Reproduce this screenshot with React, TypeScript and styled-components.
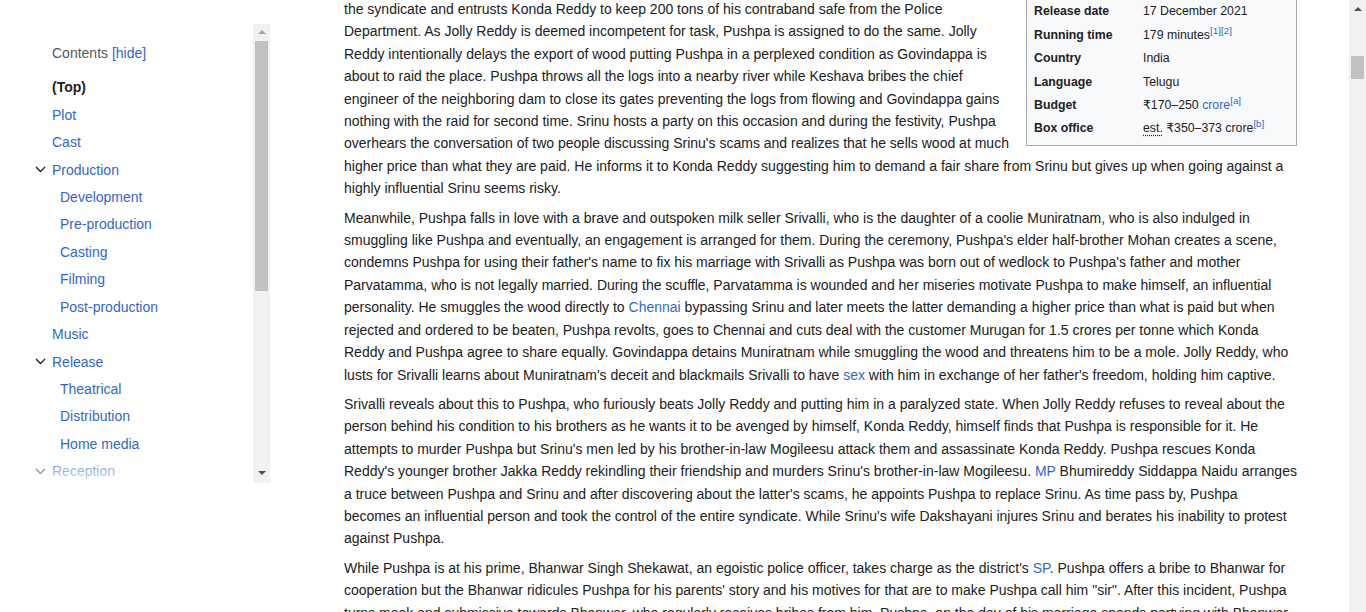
import React from "react";
import styled, { createGlobalStyle } from "styled-components";

const Global = createGlobalStyle`
  html, body { margin: 0; padding: 0; background: #fff; overflow: hidden; }
  body { font-family: "Liberation Sans", Arial, "DejaVu Sans", sans-serif; color: #202122; }
  * { box-sizing: border-box; }
`;

const Page = styled.div`
  display: flex;
  width: 1366px;
  height: 612px;
  overflow: hidden;
`;

/* ---------- Sidebar / TOC ---------- */
const Sidebar = styled.aside`
  flex: none;
  width: 270px;
  padding-top: 24px;
`;

const TocPanel = styled.nav`
  display: flex;
  height: 459px;
  padding-left: 30px;
`;

const TocScroll = styled.div`
  flex: 1;
  position: relative;
  overflow: hidden;
  padding-top: 19px;
`;

const TocHeader = styled.div`
  font-size: 14px;
  line-height: 20px;
  padding-left: 22px;
  margin-bottom: 10.5px;
  color: #54595d;
`;

const HideLink = styled.a`
  color: #3366cc;
  text-decoration: none;
  cursor: pointer;
`;

const TocList = styled.ul`
  list-style: none;
  margin: 0;
  padding: 0;
`;

const TocRow = styled.li<{ $sub?: boolean }>`
  display: grid;
  grid-template-columns: 22px 1fr;
  align-items: center;
  height: 27.45px;
  font-size: 14px;
  line-height: 20px;
  padding-left: ${(p) => (p.$sub ? "8px" : "0")};
`;

const Toggle = styled.span`
  display: flex;
  align-items: center;
  padding-left: 5px;
  color: #202122;
`;

const TocLink = styled.a<{ $current?: boolean }>`
  color: ${(p) => (p.$current ? "#202122" : "#3366cc")};
  font-weight: ${(p) => (p.$current ? "bold" : "normal")};
  text-decoration: none;
  white-space: nowrap;
`;

const Fade = styled.div`
  position: absolute;
  left: 0;
  right: 0;
  bottom: 0;
  height: 34px;
  background: linear-gradient(to bottom, rgba(255, 255, 255, 0), rgba(255, 255, 255, 0.8));
  pointer-events: none;
`;

/* ---------- Scrollbars ---------- */
const Track = styled.div<{ $top: number }>`
  flex: none;
  width: 17px;
  background: #f1f1f1;
  display: flex;
  flex-direction: column;
  align-items: center;
  padding-top: ${(p) => p.$top}px;
`;

const ArrowUp = styled.div<{ $color: string }>`
  width: 0;
  height: 0;
  border-left: 4px solid transparent;
  border-right: 4px solid transparent;
  border-bottom: 4px solid ${(p) => p.$color};
`;

const ArrowDown = styled.div<{ $color: string }>`
  width: 0;
  height: 0;
  margin-top: auto;
  margin-bottom: 8px;
  border-left: 4px solid transparent;
  border-right: 4px solid transparent;
  border-top: 4px solid ${(p) => p.$color};
`;

const Thumb = styled.div<{ $offset: number; $size: number }>`
  width: 13px;
  margin-top: ${(p) => p.$offset}px;
  height: ${(p) => p.$size}px;
  background: #c1c1c1;
`;

/* ---------- Main article ---------- */
const Main = styled.main`
  flex: 1;
  min-width: 0;
  padding: 0 52px 0 74px;
`;

const Article = styled.div`
  margin-top: -2px;
`;

const Para = styled.p`
  margin: 7px 0;
  font-size: 14px;
  line-height: 22.4px;
  color: #202122;
  &:first-of-type { margin-top: 0; }
`;

const A = styled.a`
  color: #3366cc;
  text-decoration: none;
`;

const Infobox = styled.table`
  float: right;
  clear: right;
  width: 271px;
  margin: -3px 0 7px 14px;
  padding: 4px 0 5px 0;
  border: 1px solid #a2a9b1;
  border-spacing: 0;
  background: #f8f9fa;
  font-size: 12.3px;
  line-height: 1.5;
  color: #202122;
`;

const Label = styled.th`
  width: 116px;
  height: 23.4px;
  padding: 0 0 0 7px;
  text-align: left;
  vertical-align: middle;
  font-weight: bold;
`;

const Value = styled.td`
  height: 23.4px;
  padding: 0 4px 0 0;
  vertical-align: middle;
`;

const Ref = styled.sup`
  font-size: 0.8em;
  line-height: 1;
  vertical-align: super;
  color: #3366cc;
  font-weight: normal;
`;

const Abbr = styled.abbr`
  text-decoration: underline dotted;
  text-underline-offset: 2px;
`;

const Chevron = () => (
  <svg width="11" height="7" viewBox="0 0 11 7" fill="none">
    <path d="M1 1l4.5 4.5L10 1" stroke="currentColor" strokeWidth="1.4" />
  </svg>
);

type Item = { label: string; sub?: boolean; toggle?: boolean; current?: boolean };

const tocItems: Item[] = [
  { label: "(Top)", current: true },
  { label: "Plot" },
  { label: "Cast" },
  { label: "Production", toggle: true },
  { label: "Development", sub: true },
  { label: "Pre-production", sub: true },
  { label: "Casting", sub: true },
  { label: "Filming", sub: true },
  { label: "Post-production", sub: true },
  { label: "Music" },
  { label: "Release", toggle: true },
  { label: "Theatrical", sub: true },
  { label: "Distribution", sub: true },
  { label: "Home media", sub: true },
  { label: "Reception", toggle: true },
  { label: "Box office", sub: true },
  { label: "Critical response", sub: true },
];

export default function App() {
  return (
    <>
      <Global />
      <Page>
        <Sidebar>
          <TocPanel>
            <TocScroll>
              <TocHeader>
                Contents <HideLink>[hide]</HideLink>
              </TocHeader>
              <TocList>
                {tocItems.map((it) => (
                  <TocRow key={it.label} $sub={it.sub}>
                    <Toggle>{it.toggle ? <Chevron /> : null}</Toggle>
                    <TocLink $current={it.current}>{it.label}</TocLink>
                  </TocRow>
                ))}
              </TocList>
              <Fade />
            </TocScroll>
            <Track $top={6}>
              <ArrowUp $color="#a3a3a3" />
              <Thumb $offset={7} $size={250} />
              <ArrowDown $color="#505050" />
            </Track>
          </TocPanel>
        </Sidebar>

        <Main>
          <Article>
            <Para>
              <Infobox>
                <tbody>
                  <tr>
                    <Label>Release date</Label>
                    <Value>17 December 2021</Value>
                  </tr>
                  <tr>
                    <Label>Running time</Label>
                    <Value>
                      179 minutes<Ref>[1]</Ref>
                      <Ref>[2]</Ref>
                    </Value>
                  </tr>
                  <tr>
                    <Label>Country</Label>
                    <Value>India</Value>
                  </tr>
                  <tr>
                    <Label>Language</Label>
                    <Value>Telugu</Value>
                  </tr>
                  <tr>
                    <Label>Budget</Label>
                    <Value>
                      ₹170–250 <A>crore</A>
                      <Ref>[a]</Ref>
                    </Value>
                  </tr>
                  <tr>
                    <Label>Box office</Label>
                    <Value>
                      <Abbr>est.</Abbr> ₹350–373 crore<Ref>[b]</Ref>
                    </Value>
                  </tr>
                </tbody>
              </Infobox>
              the syndicate and entrusts Konda Reddy to keep 200 tons of his contraband safe from the Police
              Department. As Jolly Reddy is deemed incompetent for task, Pushpa is assigned to do the same. Jolly
              Reddy intentionally delays the export of wood putting Pushpa in a perplexed condition as Govindappa is
              about to raid the place. Pushpa throws all the logs into a nearby river while Keshava bribes the chief
              engineer of the neighboring dam to close its gates preventing the logs from flowing and Govindappa gains
              nothing with the raid for second time. Srinu hosts a party on this occasion and during the festivity,
              Pushpa overhears the conversation of two people discussing Srinu's scams and realizes that he sells wood
              at much higher price than what they are paid. He informs it to Konda Reddy suggesting him to demand a
              fair share from Srinu but gives up when going against a highly influential Srinu seems risky.
            </Para>
            <Para>
              Meanwhile, Pushpa falls in love with a brave and outspoken milk seller Srivalli, who is the daughter of a
              coolie Muniratnam, who is also indulged in smuggling like Pushpa and eventually, an engagement is arranged
              for them. During the ceremony, Pushpa's elder half-brother Mohan creates a scene, condemns Pushpa for
              using their father's name to fix his marriage with Srivalli as Pushpa was born out of wedlock to Pushpa's
              father and mother Parvatamma, who is not legally married. During the scuffle, Parvatamma is wounded and
              her miseries motivate Pushpa to make himself, an influential personality. He smuggles the wood directly
              to <A>Chennai</A> bypassing Srinu and later meets the latter demanding a higher price than what is paid
              but when rejected and ordered to be beaten, Pushpa revolts, goes to Chennai and cuts deal with the
              customer Murugan for 1.5 crores per tonne which Konda Reddy and Pushpa agree to share equally. Govindappa
              detains Muniratnam while smuggling the wood and threatens him to be a mole. Jolly Reddy, who lusts for
              Srivalli learns about Muniratnam's deceit and blackmails Srivalli to have <A>sex</A> with him in exchange
              of her father's freedom, holding him captive.
            </Para>
            <Para>
              Srivalli reveals about this to Pushpa, who furiously beats Jolly Reddy and putting him in a paralyzed
              state. When Jolly Reddy refuses to reveal about the person behind his condition to his brothers as he
              wants it to be avenged by himself, Konda Reddy, himself finds that Pushpa is responsible for it. He
              attempts to murder Pushpa but Srinu's men led by his brother-in-law Mogileesu attack them and assassinate
              Konda Reddy. Pushpa rescues Konda Reddy's younger brother Jakka Reddy rekindling their friendship and
              murders Srinu's brother-in-law Mogileesu. <A>MP</A> Bhumireddy Siddappa Naidu arranges a truce between
              Pushpa and Srinu and after discovering about the latter's scams, he appoints Pushpa to replace Srinu. As
              time pass by, Pushpa becomes an influential person and took the control of the entire syndicate. While
              Srinu's wife Dakshayani injures Srinu and berates his inability to protest against Pushpa.
            </Para>
            <Para>
              While Pushpa is at his prime, Bhanwar Singh Shekawat, an egoistic police officer, takes charge as the
              district's <A>SP</A>. Pushpa offers a bribe to Bhanwar for cooperation but the Bhanwar ridicules Pushpa
              for his parents' story and his motives for that are to make Pushpa call him "sir". After this incident,
              Pushpa turns meek and submissive towards Bhanwar, who regularly receives bribes from him. Pushpa, on the
              day of his marriage spends partying with Bhanwar and his men, where Bhanwar humiliates him in front of
              everyone and the two become enemies.
            </Para>
          </Article>
        </Main>

        <Track $top={7}>
          <ArrowUp $color="#505050" />
          <Thumb $offset={45} $size={23} />
        </Track>
      </Page>
    </>
  );
}
